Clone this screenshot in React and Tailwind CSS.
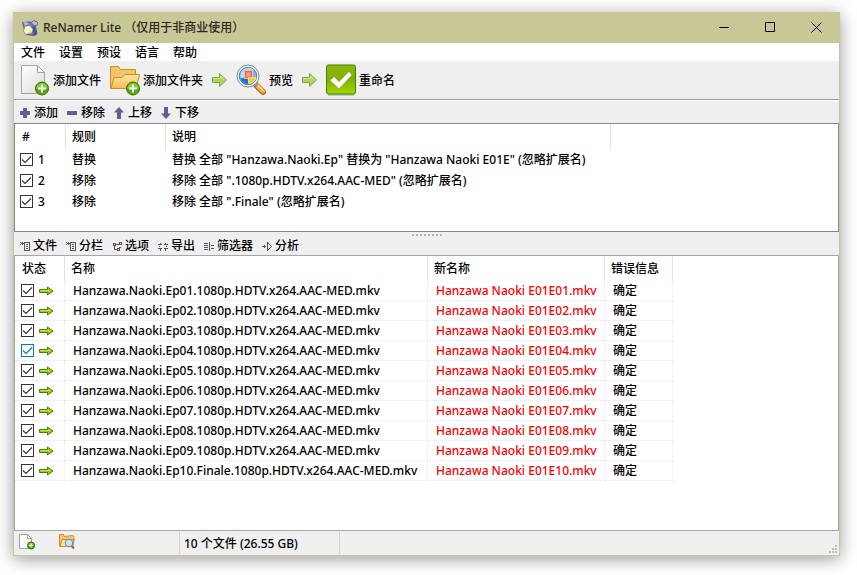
import React from "react";

const rules = [
  ["替换", '替换 全部 "Hanzawa.Naoki.Ep" 替换为 "Hanzawa Naoki E01E" (忽略扩展名)'],
  ["移除", '移除 全部 ".1080p.HDTV.x264.AAC-MED" (忽略扩展名)'],
  ["移除", '移除 全部 ".Finale" (忽略扩展名)'],
];

const files = ["01", "02", "03", "04", "05", "06", "07", "08", "09", "10"].map((n) => ({
  n,
  name: `Hanzawa.Naoki.Ep${n}${n === "10" ? ".Finale" : ""}.1080p.HDTV.x264.AAC-MED.mkv`,
  next: `Hanzawa Naoki E01E${n}.mkv`,
}));

function AppIcon() {
  return (
    <svg width="16" height="16" viewBox="0 0 16 16" aria-hidden="true">
      <path d="M.5 2.500L8 2l5 1.500L15 14l-3 1.500-8-1z" fill="#6f74cc" stroke="#45498c" strokeWidth=".8" />
      <path d="M1 2.500l3.500-.500L7 4 3 5.500z" fill="#b4b8ec" />
      <path d="M12 5l2.500 9-2.500 1.500L10.500 7z" fill="#4a4e96" />
      <path d="M9 2.500L12 .500l3.500 1.500v3l-3 1z" fill="#b9bcc0" stroke="#55585f" strokeWidth=".7" />
      <path d="M3 6l5-.500 3 4-1 3.500-6.500 1.500-2-3.500z" fill="#f6f4c8" stroke="#77775a" strokeWidth=".7" />
      <path d="M8.500 10.500l1.500 2.500-3 .700z" fill="#cbc98f" />
    </svg>
  );
}

function PlusBadge({ x, y, r }) {
  return (
    <g>
      <circle cx={x} cy={y} r={r} fill="#57a80c" stroke="#2f7300" />
      <path d={`M${x - r + 1} ${y}a${r - 1} ${r - 1} 0 0 1 ${2 * r - 2} 0z`} fill="#84cc38" />
      <path d={`M${x - r * 0.6} ${y}h${r * 1.2}M${x} ${y - r * 0.6}v${r * 1.2}`} stroke="#fff" strokeWidth={r * 0.32} />
    </g>
  );
}

function FileAddIcon() {
  return (
    <svg width="30" height="32" viewBox="0 0 30 32" aria-hidden="true">
      <defs>
        <linearGradient id="paper" x1="0" y1="0" x2="1" y2="1">
          <stop offset="0" stopColor="#fff" />
          <stop offset="1" stopColor="#dcdcdc" />
        </linearGradient>
      </defs>
      <path d="M1.500 1.500h16l7 7v21h-23z" fill="url(#paper)" stroke="#a3a3a3" />
      <path d="M17.500 1.500v7h7z" fill="#f4f4f4" stroke="#a3a3a3" />
      <PlusBadge x={22} y={24.5} r={6.5} />
    </svg>
  );
}

function FolderAddIcon() {
  return (
    <svg width="30" height="32" viewBox="0 0 30 32" aria-hidden="true">
      <defs>
        <linearGradient id="folder" x1="0" y1="0" x2="0" y2="1">
          <stop offset="0" stopColor="#ffe7a2" />
          <stop offset="1" stopColor="#f2bb52" />
        </linearGradient>
      </defs>
      <path d="M.5 24.500v-22h8l2 3h15v8l-2 11z" fill="#f3c469" stroke="#c98d2c" />
      <path d="M10 4.500h14" stroke="#fff2c8" />
      <path d="M1 24.500l3-11h8l3-3h14.500l-3.500 14z" fill="url(#folder)" stroke="#c98d2c" />
      <PlusBadge x={23} y={24.5} r={6.5} />
    </svg>
  );
}

function StepArrow() {
  return (
    <svg width="15" height="16" viewBox="0 0 15 16" aria-hidden="true">
      <path d="M.5 5.500h7v-4l7 6.500-7 6.500v-4h-7z" fill="#aed35c" stroke="#80a842" />
      <path d="M1.500 6.500h7v-2.500l4 4" fill="none" stroke="#d0e894" />
    </svg>
  );
}

function PreviewIcon() {
  return (
    <svg width="30" height="32" viewBox="0 0 30 32" aria-hidden="true">
      <path d="M20 21l7 7" stroke="#a7651c" strokeWidth="6" strokeLinecap="round" />
      <path d="M20.500 21l6.500 6.500" stroke="#f6ab3b" strokeWidth="4" strokeLinecap="round" />
      <path d="M21.500 21l5.500 5.500" stroke="#ffe0a0" strokeWidth="1.200" strokeLinecap="round" />
      <path d="M18 19l3 3" stroke="#8e8e8e" strokeWidth="3" />
      <circle cx="12" cy="12" r="11" fill="#f4f4f4" stroke="#858585" />
      <circle cx="12" cy="12" r="8.700" fill="#79bbea" stroke="#3f7fb5" />
      <path d="M5 9a8 8 0 0 1 13-3L6 16a8 8 0 0 1-1-7z" fill="#b4ddf6" />
      <path d="M4.500 14.500l4-1 4 1v5.500a8 8 0 0 1-8-5.500z" fill="#2474c8" />
      <path d="M8.500 6.500h8v8h-8z" fill="#ee6d50" stroke="#f9b5a1" />
      <path d="M10.500 8.500h4v4h-4z" fill="#ffa082" />
      <path d="M12.500 13.500h7.500a8 8 0 0 1-7.500 6z" fill="#fbc940" stroke="#fff0a0" strokeWidth=".7" />
    </svg>
  );
}

function RenameIcon() {
  return (
    <svg width="30" height="32" viewBox="0 0 30 32" aria-hidden="true">
      <defs>
        <linearGradient id="tick" x1="0" y1="0" x2="0" y2="1">
          <stop offset="0" stopColor="#91b80a" />
          <stop offset=".5" stopColor="#7eb000" />
          <stop offset="1" stopColor="#a5d800" />
        </linearGradient>
      </defs>
      <path d="M2 31h26" stroke="#c4c4c4" strokeWidth="2" />
      <rect x=".5" y="1" width="29" height="29" rx="2" fill="url(#tick)" stroke="#3c8206" />
      <path d="M4 16.500l4-4 5 5L23 7.500l3 3.500L13 25z" fill="#fff" stroke="#6f9d10" strokeWidth=".6" />
    </svg>
  );
}

const ruleGlyphs = {
  plus: "M3 1h4v3h3v4H7v3H3V8H0V4h3z",
  minus: "M0 4h10v4H0z",
  up: "M5 0l5 5.500H7V12H3V5.500H0z",
  down: "M5 12l5-5.500H7V0H3v6.500H0z",
};

function RuleGlyph({ kind }) {
  return (
    <svg width="10" height="12" viewBox="0 0 10 12" aria-hidden="true">
      <path d={ruleGlyphs[kind]} fill="#62608f" />
    </svg>
  );
}

const fileGlyphs = {
  list: "M0 1.500h1M1 2.500h3M0 3.500h1M2.500 1v3M4.500 1.500h5v8h-5zM6 3.500h2M6 5.500h2M6 7.500h2",
  options: "M1.500 2.500h2v2h-2zM7.500 1.500h2v2h-2zM5.500 7.500h2v2h-2zM4 3.500h3M2.500 5v3.500H5M7 6h2",
  export: "M0 3.500h4M0 7.500h4M6 3.500h4M6 7.500h4M2.500 2v1M2.500 8v1.500M7.500 2v1M7.500 8v1.500M1.500 5v1M8.500 5v1",
  filter: "M0 2.500h4M0 4.500h4M0 6.500h4M0 8.500h4M5.500 1v9M7 4.500h3M7 7.500h3",
  parse: "M0 5.500h4M2.500 4v3M5.500 1.500v8l4-4z",
};

function FileGlyph({ kind }) {
  return (
    <svg width="10" height="11" viewBox="0 0 10 11" shapeRendering="crispEdges" aria-hidden="true">
      <path d={fileGlyphs[kind]} fill="none" stroke="#555" />
    </svg>
  );
}

function RowArrow() {
  return (
    <svg width="15" height="10" viewBox="0 0 15 10" aria-hidden="true">
      <path d="M.5 3.500h8V1L14 5 8.500 9V6.500h-8z" fill="#96cf12" stroke="#4b7c08" />
      <path d="M1.500 4.500h10" stroke="#c5ec52" />
    </svg>
  );
}

function Check({ label, active }) {
  return (
    <span className="grid size-[13px] shrink-0">
      <input
        type="checkbox"
        defaultChecked
        aria-label={label}
        className={`peer col-start-1 row-start-1 size-[13px] appearance-none border bg-white ${active ? "border-[#0078d7]" : "border-[#333]"}`}
      />
      <svg
        className={`pointer-events-none invisible col-start-1 row-start-1 peer-checked:visible ${active ? "text-[#0078d7]" : "text-[#333]"}`}
        width="13"
        height="13"
        viewBox="0 0 13 13"
        aria-hidden="true"
      >
        <path d="M2 6.500l3 3 6-6" fill="none" stroke="currentColor" strokeWidth="1.100" />
      </svg>
    </span>
  );
}

function BigButton({ icon, children }) {
  return (
    <button className="flex items-center gap-[3px] whitespace-nowrap">
      {icon}
      <span className="pt-[2px]">{children}</span>
    </button>
  );
}

const dotted = "border-r border-b border-dotted border-[#e8e8e8]";
const headCell = "border-r border-[#e2e2e2] text-left font-medium";

export default function App() {
  return (
    <div className="flex h-screen bg-white pt-3 pr-[17px] pb-[19px] pl-[13px] font-['Noto_Sans','Noto_Sans_CJK_SC',sans-serif] text-[12px] leading-4 font-medium text-black">
      <main className="flex min-w-0 flex-1 flex-col border border-t-0 border-[#c8c796] bg-[#efefef] shadow-[0_3px_16px_rgba(0,0,0,0.4)]">
        <header className="flex h-[31px] shrink-0 items-center bg-[#c8c796] pl-2">
          <AppIcon />
          <h1 className="flex-1 pl-[5px] font-medium whitespace-nowrap text-[#2a2a1e]">ReNamer Lite （仅用于非商业使用）</h1>
          <button aria-label="最小化" className="grid h-full w-[46px] place-items-center">
            <svg width="11" height="11" viewBox="0 0 11 11"><path d="M0 5.500h10" stroke="#000" /></svg>
          </button>
          <button aria-label="最大化" className="grid h-full w-[46px] place-items-center">
            <svg width="11" height="11" viewBox="0 0 11 11"><path d="M.5.500h9v9h-9z" fill="none" stroke="#000" /></svg>
          </button>
          <button aria-label="关闭" className="grid h-full w-[46px] place-items-center">
            <svg width="11" height="11" viewBox="0 0 11 11"><path d="M.5.500l10 10M10.500.500l-10 10" stroke="#000" /></svg>
          </button>
        </header>

        <nav className="flex h-[18px] shrink-0 items-center gap-[14px] bg-white pt-[2px] pl-[7px]">
          {["文件", "设置", "预设", "语言", "帮助"].map((m) => (
            <button key={m}>{m}</button>
          ))}
        </nav>

        <div className="flex h-[39px] shrink-0 items-center gap-[9px] border-b border-[#999] pl-[6px]">
          <BigButton icon={<FileAddIcon />}>添加文件</BigButton>
          <BigButton icon={<FolderAddIcon />}>添加文件夹</BigButton>
          <StepArrow />
          <BigButton icon={<PreviewIcon />}>预览</BigButton>
          <StepArrow />
          <BigButton icon={<RenameIcon />}>重命名</BigButton>
        </div>

        <div className="flex h-[23px] shrink-0 items-center gap-[9px] border-t border-white pt-[2px] pl-[6px]">
          {[["plus", "添加"], ["minus", "移除"], ["up", "上移"], ["down", "下移"]].map(([k, t]) => (
            <button key={k} className="flex items-center gap-1">
              <RuleGlyph kind={k} />
              {t}
            </button>
          ))}
        </div>

        <section className="h-[109px] shrink-0 overflow-hidden border border-[#828790] bg-white">
          <table className="table-fixed border-separate border-spacing-0 whitespace-nowrap">
            <colgroup>
              <col className="w-[51px]" />
              <col className="w-[100px]" />
              <col className="w-[445px]" />
            </colgroup>
            <thead>
              <tr className="h-[25px]">
                <th className={`${headCell} pl-[7px]`}>#</th>
                <th className={`${headCell} pl-[6px]`}>规则</th>
                <th className={`${headCell} pl-[6px]`}>说明</th>
              </tr>
            </thead>
            <tbody>
              {rules.map(([rule, text], i) => (
                <tr key={i} className="h-[21px]">
                  <td className="pl-[5px]">
                    <div className="flex items-center gap-[5px]">
                      <Check label={`规则 ${i + 1}`} />
                      {i + 1}
                    </div>
                  </td>
                  <td className="pl-[6px]">{rule}</td>
                  <td className="pl-[6px]">{text}</td>
                </tr>
              ))}
            </tbody>
          </table>
        </section>

        <div className="flex h-[5px] shrink-0 items-center justify-center gap-[2px]">
          {[0, 1, 2, 3, 4, 5, 6, 7].map((d) => (
            <i key={d} className="size-[2px] bg-[#b4b4b4]" />
          ))}
        </div>

        <div className="flex h-[18px] shrink-0 items-center gap-[9px] pl-[6px]">
          {[["list", "文件"], ["list", "分栏"], ["options", "选项"], ["export", "导出"], ["filter", "筛选器"], ["parse", "分析"]].map(([k, t]) => (
            <button key={t} className="flex items-center gap-[3px]">
              <FileGlyph kind={k} />
              {t}
            </button>
          ))}
        </div>

        <section className="min-h-0 flex-1 overflow-hidden border border-[#a5a6ab] bg-white">
          <table className="table-fixed border-separate border-spacing-0 whitespace-nowrap">
            <colgroup>
              <col className="w-[50px]" />
              <col className="w-[363px]" />
              <col className="w-[177px]" />
              <col className="w-[68px]" />
            </colgroup>
            <thead>
              <tr className="h-[25px]">
                <th className={`${headCell} pl-[7px]`}>状态</th>
                <th className={`${headCell} pl-[6px]`}>名称</th>
                <th className={`${headCell} pl-[6px]`}>新名称</th>
                <th className={`${headCell} pl-[6px]`}>错误信息</th>
              </tr>
            </thead>
            <tbody>
              {files.map((f) => (
                <tr key={f.n} className="h-5">
                  <td className={`${dotted} pl-[6px]`}>
                    <div className="flex items-center gap-[5px]">
                      <Check label={f.name} active={f.n === "04"} />
                      <RowArrow />
                    </div>
                  </td>
                  <td className={`${dotted} pl-2`}>{f.name}</td>
                  <td className={`${dotted} pl-2 text-[#ff0000]`}>{f.next}</td>
                  <td className={`${dotted} pl-2`}>确定</td>
                </tr>
              ))}
            </tbody>
          </table>
        </section>

        <footer className="flex h-6 shrink-0 items-center">
          <div className="flex h-[22px] w-[166px] items-center gap-6 border-r border-[#d0d0d0] pb-[2px] pl-[5px]">
            <button aria-label="添加文件">
              <svg className="block" width="16" height="16" viewBox="0 0 16 16">
                <path d="M.5.500h8l4 4v10H.500z" fill="#fafafa" stroke="#a0a0a0" />
                <path d="M8.500.500v4h4" fill="none" stroke="#a0a0a0" />
                <PlusBadge x={12} y={11.5} r={3.5} />
              </svg>
            </button>
            <button aria-label="浏览文件夹">
              <svg className="block" width="16" height="16" viewBox="0 0 16 16">
                <path d="M.5 12.500V.500h4l1 2 8-1 1.500 1v3l-1 7z" fill="#f5c76c" stroke="#c98d2c" />
                <path d="M1 12.500L3 5.500h12l-2 7z" fill="#ffe09a" stroke="#c98d2c" />
                <path d="M12 11.500l3 3" stroke="#a9661f" strokeWidth="2" />
                <circle cx="10" cy="9" r="3.800" fill="#bfe6fb" stroke="#5e8fae" />
              </svg>
            </button>
          </div>
          <p className="flex h-[22px] w-[160px] items-center border-r border-[#d0d0d0] pt-px pl-1">10 个文件 (26.55 GB)</p>
          <svg className="mt-auto mr-[2px] mb-[2px] ml-auto" width="8" height="8" viewBox="0 0 8 8" aria-hidden="true">
            <path d="M6 0h2v2H6zM3 3h2v2H3zM6 3h2v2H6zM0 6h2v2H0zM3 6h2v2H3zM6 6h2v2H6z" fill="#bcbcbc" />
          </svg>
        </footer>
      </main>
    </div>
  );
}
